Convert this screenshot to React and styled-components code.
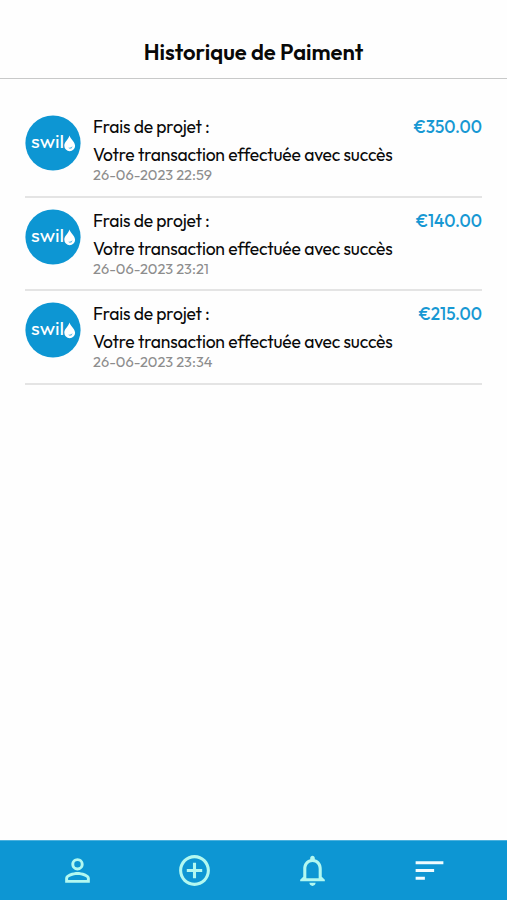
import React from "react";
import styled, { createGlobalStyle } from "styled-components";
import {
  MdPersonOutline,
  MdAddCircleOutline,
  MdNotificationsNone,
  MdSort,
} from "react-icons/md";

const payments = [
  { id: 1, amount: "€350.00", date: "26-06-2023 22:59" },
  { id: 2, amount: "€140.00", date: "26-06-2023 23:21" },
  { id: 3, amount: "€215.00", date: "26-06-2023 23:34" },
];

const SwiloLogo = () => (
  <Logo viewBox="0 0 56 56">
    <circle cx="28" cy="28" r="27.6" fill="#0d96d3" />
    <text x="6" y="33" textLength="33" lengthAdjust="spacingAndGlyphs">
      swil
    </text>
    <path
      d="M44.4 20.5c1 3.6 5.7 6.4 5.7 10.3a5.4 5.4 0 0 1-10.8 0c0-4 4.2-6.3 5.1-10.3z"
      fill="#fff"
    />
    <path d="M43.4 32.6q2.4.5 4.2-1.3-.5 2.5-2.5 2.5-1.2 0-1.7-1.2z" fill="#58b7e1" />
  </Logo>
);

export default function App() {
  return (
    <Screen>
      <GlobalStyle />
      <Header>
        <Title>Historique de Paiment</Title>
      </Header>
      <List>
        {payments.map((payment) => (
          <Payment key={payment.id}>
            <SwiloLogo />
            <Details>
              <Label>Frais de projet :</Label>
              <Message>Votre transaction effectuée avec succès</Message>
              <PaymentDate>{payment.date}</PaymentDate>
            </Details>
            <Amount>{payment.amount}</Amount>
          </Payment>
        ))}
      </List>
      <TabBar>
        <Tab aria-label="Profil">
          <MdPersonOutline />
        </Tab>
        <Tab aria-label="Ajouter">
          <MdAddCircleOutline />
        </Tab>
        <Tab aria-label="Notifications">
          <MdNotificationsNone />
        </Tab>
        <Tab aria-label="Menu" $color="#effcff">
          <MdSort />
        </Tab>
      </TabBar>
    </Screen>
  );
}

const GlobalStyle = createGlobalStyle`
  * {
    box-sizing: border-box;
  }

  body {
    margin: 0;
    background-color: #fefefe;
  }
`;

const Screen = styled.div`
  display: flex;
  flex-direction: column;
  height: 100vh;
  color: #0a0a0a;
  font-family: Outfit, Lato, sans-serif;
`;

const Header = styled.header`
  display: flex;
  justify-content: center;
  height: 79px;
  padding-top: 38px;
  border-bottom: 1px solid #c8c9c9;
`;

const Title = styled.h1`
  margin: 0;
  color: #080808;
  font-size: 22px;
  font-weight: 600;
  line-height: 28px;
  white-space: nowrap;
`;

const List = styled.main`
  flex: 1;
  padding: 25px 25px 0;
`;

const Payment = styled.article`
  display: flex;
  align-items: flex-start;
  height: 93.7px;
  padding-top: 11px;
  border-bottom: 2px solid #e4e4e4;
`;

const Logo = styled.svg`
  flex: none;
  width: 56px;
  height: 56px;

  text {
    fill: #fff;
    font-size: 17.5px;
    font-weight: 400;
  }
`;

const Details = styled.div`
  flex: 1;
  margin-left: 12px;
  white-space: nowrap;
`;

const Label = styled.div`
  font-size: 17.5px;
  font-weight: 400;
  line-height: 24px;
  letter-spacing: -0.19px;
`;

const Message = styled.div`
  margin-top: 4px;
  font-size: 17.5px;
  font-weight: 400;
  line-height: 24px;
  letter-spacing: -0.19px;
`;

const PaymentDate = styled.div`
  color: #8d8d8d;
  font-size: 14.6px;
  font-weight: 400;
  line-height: 16px;
`;

const Amount = styled.div`
  color: #1698d3;
  font-size: 17.1px;
  font-weight: 500;
  line-height: 24px;
`;

const TabBar = styled.nav`
  display: flex;
  justify-content: space-around;
  height: 60px;
  padding: 0 19px;
  border-top: 1px solid #4bb1de;
  background-color: #0d96d3;
`;

const Tab = styled.button`
  display: flex;
  flex: 1;
  align-items: center;
  justify-content: center;
  padding: 0;
  border: 0;
  background: none;
  color: ${({ $color }) => $color || "#b2f8f0"};

  svg {
    width: 37px;
    height: 37px;
  }
`;
